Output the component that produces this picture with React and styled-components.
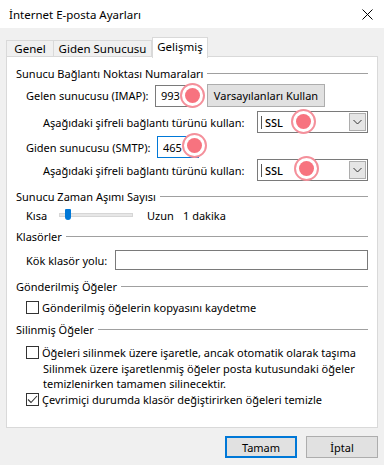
import React from "react";
import styled, { createGlobalStyle } from "styled-components";

const GlobalStyle = createGlobalStyle`
  html, body {
    margin: 0;
    padding: 0;
    background: #f0f0f0;
  }
  * {
    box-sizing: border-box;
  }
`;

const Window = styled.div`
  position: relative;
  width: 384px;
  height: 465px;
  background: #f0f0f0;
  font-family: "Noto Sans", "Open Sans", sans-serif;
  font-size: 11px;
  color: #000;
  overflow: hidden;
`;

const TitleBar = styled.div`
  height: 28px;
  background: #fff;
  display: flex;
  align-items: center;
  justify-content: space-between;
  padding: 0 9px 0 9px;
  font-size: 11.5px;
`;

const CloseButton = styled.div`
  width: 14px;
  height: 14px;
  display: flex;
  align-items: center;
  justify-content: center;
  margin-right: 1px;
`;

const Body = styled.div`
  padding: 8px 6px 0 6px;
`;

const TabStrip = styled.div`
  display: flex;
  align-items: flex-end;
  height: 21px;
  position: relative;
  z-index: 1;
`;

const Tab = styled.div`
  height: ${(p) => (p.selected ? "21px" : "17px")};
  width: ${(p) => p.w}px;
  margin-bottom: ${(p) => (p.selected ? "-1px" : "0")};
  display: flex;
  align-items: center;
  justify-content: center;
  background: ${(p) => (p.selected ? "#fff" : "#f0f0f0")};
  border: 1px solid #d9d9d9;
  border-bottom: ${(p) => (p.selected ? "none" : "1px solid #d9d9d9")};
  border-left: ${(p) => (p.first || p.selected ? "1px solid #d9d9d9" : "none")};
  padding-bottom: ${(p) => (p.selected ? "3px" : "0")};
  font-size: 11.5px;
`;

const Panel = styled.div`
  height: 372px;
  margin-top: -1px;
  background: #fff;
  border: 1px solid #d9d9d9;
  padding: 8px 9px 0 9px;
`;

const Legend = styled.div`
  display: flex;
  align-items: center;
  height: 16px;
  margin-top: ${(p) => p.mt || 0}px;
  white-space: nowrap;

  &::after {
    content: "";
    flex: 1;
    height: 1px;
    background: #a0a0a0;
    margin-left: 4px;
  }
`;

const Row = styled.div`
  display: flex;
  align-items: center;
  height: ${(p) => p.h || 16}px;
  margin-top: ${(p) => p.mt || 0}px;
  padding-left: ${(p) => p.indent || 10}px;
`;

const Label = styled.span`
  width: ${(p) => (p.w ? `${p.w}px` : "auto")};
  flex-shrink: 0;
  white-space: nowrap;
`;

const TextBox = styled.div`
  width: ${(p) => (p.w ? `${p.w}px` : "auto")};
  flex: ${(p) => (p.w ? "none" : 1)};
  height: ${(p) => p.h || 22}px;
  border: 1px solid ${(p) => (p.focused ? "#0078d7" : "#7a7a7a")};
  background: #fff;
  display: flex;
  align-items: center;
  padding-left: 5px;
`;

const Button = styled.div`
  width: ${(p) => p.w}px;
  height: ${(p) => p.h || 23}px;
  margin-left: ${(p) => p.ml || 0}px;
  background: #e1e1e1;
  border: ${(p) => (p.primary ? "2px solid #0078d7" : "1px solid #adadad")};
  display: flex;
  align-items: center;
  justify-content: center;
  white-space: nowrap;
`;

const Select = styled.div`
  width: 112px;
  height: 22px;
  border: 1px solid #7a7a7a;
  background: #fff;
  display: flex;
  align-items: center;
  padding: 1px;
`;

const SelectValue = styled.div`
  flex: 1;
  display: flex;
  align-items: center;
  padding-left: 2px;
  height: 100%;
  font-weight: 500;

  &::before {
    content: "";
    width: 1px;
    height: 13px;
    background: #555;
    margin-right: 3px;
  }
`;

const SelectArrow = styled.div`
  width: 17px;
  height: 18px;
  background: #e5e5e5;
  border: 1px solid #adadad;
  display: flex;
  align-items: center;
  justify-content: center;
`;

const SliderTrack = styled.div`
  position: relative;
  width: 74px;
  height: 4px;
  margin: 0 14px 0 11px;
  background: #e7e7e7;
  border: 1px solid #d6d6d6;
`;

const SliderThumb = styled.div`
  position: absolute;
  left: 5px;
  top: -5px;
  width: 6px;
  height: 11px;
  background: #0078d7;
  border-radius: 1px 1px 3px 3px;
`;

const Check = styled.div`
  width: 13px;
  height: 13px;
  border: 1px solid #333;
  background: #fff;
  margin-right: 3px;
  display: flex;
  align-items: center;
  justify-content: center;
`;

const Note = styled.div`
  margin-top: 1px;
  padding-left: 27px;
  line-height: 15px;
  white-space: nowrap;
`;

const Footer = styled.div`
  display: flex;
  justify-content: flex-end;
  gap: 9px;
  padding: 8px 0 0 0;
`;

const Marker = styled.div`
  position: absolute;
  left: ${(p) => p.x - 12.5}px;
  top: ${(p) => p.y - 12.5}px;
  width: 25px;
  height: 25px;
  border-radius: 50%;
  border: 2px solid #f4909b;
  background: #fff;
  display: flex;
  align-items: center;
  justify-content: center;

  &::after {
    content: "";
    width: 15px;
    height: 15px;
    border-radius: 50%;
    background: #f7737f;
  }
`;

function Chevron() {
  return (
    <svg width="9" height="6" viewBox="0 0 9 6">
      <path d="M0.5 1 L4.5 5 L8.5 1" fill="none" stroke="#333" strokeWidth="1" />
    </svg>
  );
}

function Tick() {
  return (
    <svg width="11" height="11" viewBox="0 0 11 11">
      <path d="M1 5.5 L4 8.5 L10 2" fill="none" stroke="#333" strokeWidth="1.1" />
    </svg>
  );
}

function SslSelect() {
  return (
    <Select>
      <SelectValue>SSL</SelectValue>
      <SelectArrow>
        <Chevron />
      </SelectArrow>
    </Select>
  );
}

const markers = [
  { x: 192, y: 95 },
  { x: 303, y: 121 },
  { x: 194, y: 145 },
  { x: 306, y: 168 },
];

export default function App() {
  return (
    <Window>
      <GlobalStyle />
      <TitleBar>
        <span>İnternet E-posta Ayarları</span>
        <CloseButton>
          <svg width="11" height="11" viewBox="0 0 11 11">
            <path d="M0.5 0.5 L10.5 10.5 M10.5 0.5 L0.5 10.5" stroke="#000" strokeWidth="1" />
          </svg>
        </CloseButton>
      </TitleBar>
      <Body>
        <TabStrip>
          <Tab first w={48}>Genel</Tab>
          <Tab w={98}>Giden Sunucusu</Tab>
          <Tab selected w={56}>Gelişmiş</Tab>
        </TabStrip>
        <Panel>
          <Legend>Sunucu Bağlantı Noktası Numaraları</Legend>
          <Row h={23} mt={3}>
            <Label w={129}>Gelen sunucusu (IMAP):</Label>
            <TextBox w={42}>993</TextBox>
            <Button w={118} ml={10}>Varsayılanları Kullan</Button>
          </Row>
          <Row h={22} mt={4} indent={27}>
            <Label w={214}>Aşağıdaki şifreli bağlantı türünü kullan:</Label>
            <SslSelect />
          </Row>
          <Row h={22} mt={3}>
            <Label w={131}>Giden sunucusu (SMTP):</Label>
            <TextBox w={42} focused>465</TextBox>
          </Row>
          <Row h={22} mt={1} indent={27}>
            <Label w={214}>Aşağıdaki şifreli bağlantı türünü kullan:</Label>
            <SslSelect />
          </Row>

          <Legend mt={7}>Sunucu Zaman Aşımı Sayısı</Legend>
          <Row mt={3}>
            <Label w={22}>Kısa</Label>
            <SliderTrack>
              <SliderThumb />
            </SliderTrack>
            <Label w={36}>Uzun</Label>
            <Label>1 dakika</Label>
          </Row>

          <Legend mt={5}>Klasörler</Legend>
          <Row h={20} mt={6}>
            <Label w={89}>Kök klasör yolu:</Label>
            <TextBox h={20} />
          </Row>

          <Legend mt={8}>Gönderilmiş Öğeler</Legend>
          <Row mt={5}>
            <Check />
            <Label>Gönderilmiş öğelerin kopyasını kaydetme</Label>
          </Row>

          <Legend mt={6}>Silinmiş Öğeler</Legend>
          <Row mt={7}>
            <Check />
            <Label>Öğeleri silinmek üzere işaretle, ancak otomatik olarak taşıma</Label>
          </Row>
          <Note>
            Silinmek üzere işaretlenmiş öğeler posta kutusundaki öğeler
            <br />
            temizlenirken tamamen silinecektir.
          </Note>
          <Row>
            <Check>
              <Tick />
            </Check>
            <Label>Çevrimiçi durumda klasör değiştirirken öğeleri temizle</Label>
          </Row>
        </Panel>
        <Footer>
          <Button primary w={72} h={22}>Tamam</Button>
          <Button w={72} h={22}>İptal</Button>
        </Footer>
      </Body>
      {markers.map((m, i) => (
        <Marker key={i} x={m.x} y={m.y} />
      ))}
    </Window>
  );
}
